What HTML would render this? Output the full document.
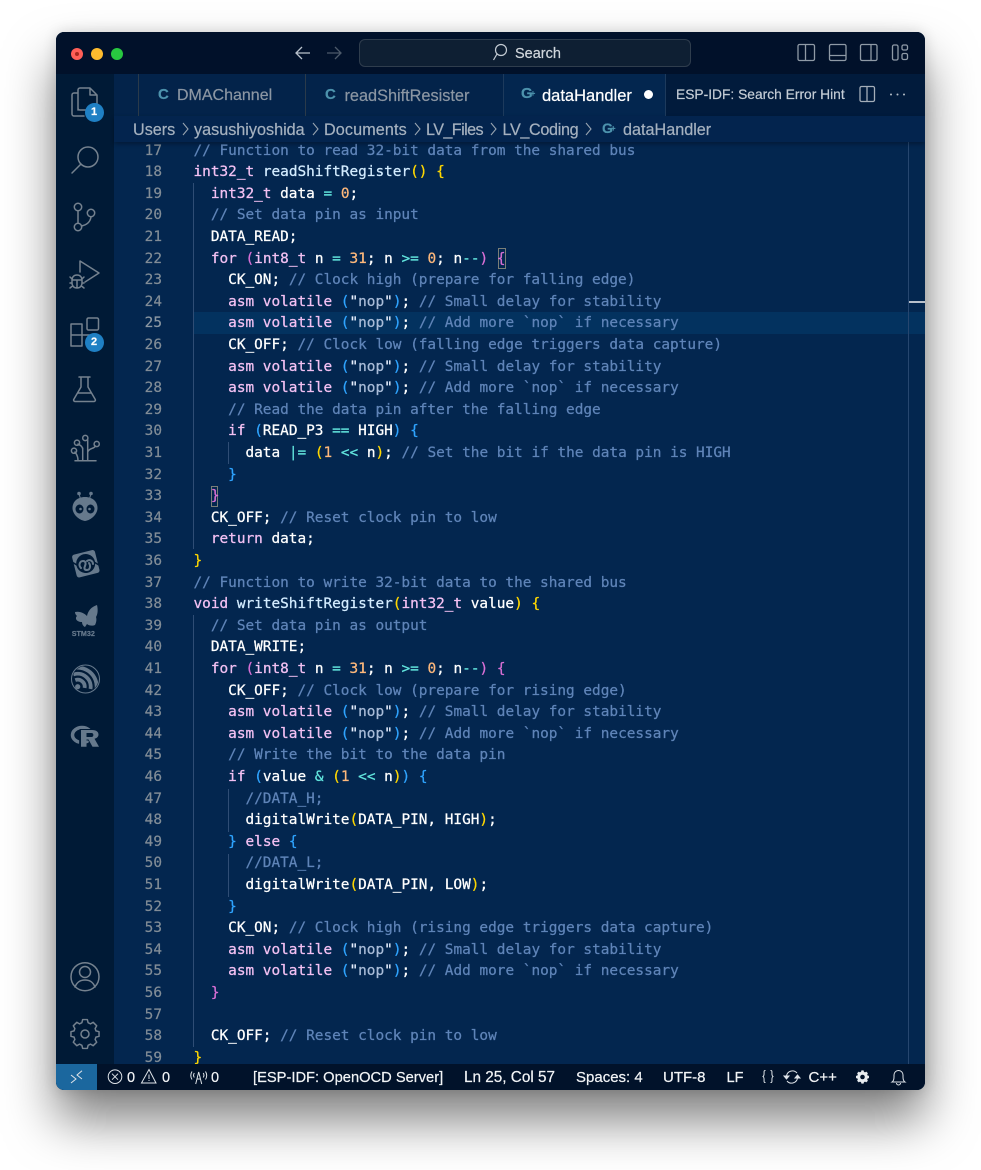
<!DOCTYPE html>
<html><head><meta charset="utf-8"><style>
html,body{margin:0;padding:0;background:#fff;width:981px;height:1170px;overflow:hidden}
*{box-sizing:border-box}
.abs,.win,.l,.n{position:absolute}
.win{left:56px;top:32px;width:869px;height:1058px;border-radius:8px;background:#03264f;box-shadow:0 30px 50px rgba(0,0,0,.5),0 0 14px rgba(0,0,0,.14);overflow:hidden}
.ui{font-family:"Liberation Sans",sans-serif;position:absolute;white-space:pre;-webkit-text-stroke:.2px}
.l{left:137.5px;height:21.6px;font:14.4px/21.6px "DejaVu Sans Mono","Liberation Mono",monospace;color:#fff;white-space:pre;-webkit-text-stroke:.25px}
.n{left:60px;width:46px;text-align:right;font:14.4px/21.6px "DejaVu Sans Mono","Liberation Mono",monospace;color:#828d97;-webkit-text-stroke:.2px}
.c{color:#5f84b8}.k{color:#f2c0f2}.f{color:#d3ecff}.o{color:#62e6de}.d{color:#ffb97c}.y{color:#ffd700}.p{color:#da70d6}.b{color:#2fa4ff}.s{color:#a9bcd8}.q{color:#e8f0ff}
.g{position:absolute;width:1px;background:#2f4d75}
svg{position:absolute;overflow:visible}
.st{font-size:14.5px;color:#f2f4f6;top:1032.5px;line-height:26px}
.bc{font-size:16.2px;color:#a5b1bf;top:84.5px;line-height:26px}
</style></head><body>
<div class="win">
<div class="abs" style="left:0;top:0;width:869px;height:42px;background:#01112a"></div>
<div class="abs" style="left:0;top:42px;width:58px;height:990px;background:#001a36"></div>
<div class="abs" style="left:58px;top:42px;width:811px;height:42px;background:#03234a"></div>
<div class="abs" style="left:82px;top:42px;width:1px;height:42px;background:#2a3a4a"></div>
<div class="abs" style="left:249px;top:42px;width:1px;height:42px;background:#2a3a4a"></div>
<div class="abs" style="left:447px;top:42px;width:163px;height:42px;background:#03264f;border-left:1px solid #1d3a5c;border-right:1px solid #1d3a5c"></div>
<div class="abs" style="left:610px;top:42px;width:259px;height:42px;background:#011b3c"></div>
<div class="abs" style="left:58px;top:84px;width:811px;height:26px;background:#03244e;box-shadow:0 2px 4px rgba(0,0,0,.3);z-index:3"></div>

<!-- traffic lights -->
<div class="abs" style="left:15px;top:16px;width:12px;height:12px;border-radius:50%;background:#ff5f57"></div>
<div class="abs" style="left:19px;top:20px;width:4px;height:4px;border-radius:50%;background:#a8281e"></div>
<div class="abs" style="left:35px;top:16px;width:12px;height:12px;border-radius:50%;background:#febc2e"></div>
<div class="abs" style="left:55px;top:16px;width:12px;height:12px;border-radius:50%;background:#28c840"></div>
<div class="abs" style="left:303px;top:7px;width:332px;height:28px;border-radius:6px;background:#0e1f33;border:1px solid #2f3d4d"></div>
<div class="ui" style="left:459px;top:8px;line-height:28px;font-size:14.5px;color:#d0d6dc">Search</div>
<!-- title icons -->
<svg style="left:0;top:0" width="869" height="42" fill="none"><path d="M240 21H254M246 15L240 21L246 27" stroke="#b9c2cc" stroke-width="1.3"/><path d="M271 21H285M279 15L285 21L279 27" stroke="#4d5a6a" stroke-width="1.3"/>
<circle cx="445" cy="18" r="5.5" stroke="#c4ccd4" stroke-width="1.2"/><path d="M441 22L437.500 28" stroke="#c4ccd4" stroke-width="1.2"/>
<g stroke="#8f9aa6" stroke-width="1.3"><rect x="742" y="12.500" width="16.500" height="16" rx="1.500"/><path d="M749.500 12.500V28.500"/><rect x="773.500" y="12.500" width="16.500" height="16" rx="1.500"/><path d="M773.500 23.500H790"/><rect x="804.500" y="12.500" width="16.500" height="16" rx="1.500"/><path d="M815 12.500V28.500"/><rect x="836.500" y="13" width="5.500" height="15" rx="1.500"/><rect x="846" y="13" width="5.500" height="5" rx="1.500"/><rect x="846" y="21.500" width="5.500" height="6" rx="1.500"/></g></svg>

<!-- tabs -->
<div class="ui" style="left:102px;top:42px;line-height:42px;font-size:15px;font-weight:bold;color:#4d93ad">C</div>
<div class="ui" style="left:121px;top:42px;line-height:44px;font-size:16px;color:#8b96a3">DMAChannel</div>
<div class="ui" style="left:269px;top:42px;line-height:42px;font-size:15px;font-weight:bold;color:#4d93ad">C</div>
<div class="ui" style="left:288.500px;top:42px;line-height:44px;font-size:16.300px;color:#8b96a3">readShiftResister</div>
<div class="ui" style="left:465px;top:41px;line-height:42px;font-size:15px;font-weight:bold;color:#4d93ad">G<span style="font-size:8px;position:relative;top:-2px;left:-2px">+</span></div>
<div class="ui" style="left:486px;top:42px;line-height:44px;font-size:16.500px;color:#fff">dataHandler</div>
<div class="abs" style="left:587.500px;top:57.500px;width:9px;height:9px;border-radius:50%;background:#fff"></div>
<div class="ui" style="left:620px;top:42px;line-height:42px;font-size:13.800px;color:#c5cdd6">ESP-IDF: Search Error Hint</div>
<svg style="left:0;top:0" width="869" height="84" fill="none"><rect x="804" y="54.500" width="14.500" height="15" rx="1.500" stroke="#a4aeb9" stroke-width="1.300"/><path d="M811 54.500V69.500" stroke="#a4aeb9" stroke-width="1.300"/><g fill="#b5bec8"><circle cx="835" cy="62.500" r="1"/><circle cx="841.500" cy="62.500" r="1"/><circle cx="848" cy="62.500" r="1"/></g></svg>

<!-- breadcrumb -->
<div style="position:absolute;left:0;top:0;z-index:4">
<div class="ui bc" style="left:77px">Users</div>
<div class="ui bc" style="left:138px">yasushiyoshida</div>
<div class="ui bc" style="left:268px;letter-spacing:.1px">Documents</div>
<div class="ui bc" style="left:370px;letter-spacing:-.6px">LV_Files</div>
<div class="ui bc" style="left:446.500px;letter-spacing:-.35px">LV_Coding</div>
<div class="ui bc" style="left:567px">dataHandler</div>
<div class="ui" style="left:546px;top:83px;line-height:26px;font-size:14px;font-weight:bold;color:#4d93ad">G<span style="font-size:8px;position:relative;top:-2px;left:-2px">+</span></div>
<svg style="left:0;top:0" width="600" height="110" fill="none" stroke="#97a3b0" stroke-width="1.100"><path d="M127 91L132 97L127 103M257 91L262 97L257 103M359 91L364 97L359 103M435 91L440 97L435 103M530 91L535 97L530 103"/></svg>
</div>

<!-- editor -->
<div class="abs" style="left:138px;top:279.500px;width:731px;height:22px;background:#03325f"></div>
<div class="abs" style="left:852px;top:110px;width:1px;height:922px;background:#26466f"></div>
<div class="abs" style="left:853px;top:269px;width:16px;height:2px;background:#b8c0cc"></div>
<div class="g" style="left:137px;top:151px;height:366px"></div>
<div class="g" style="left:137px;top:583px;height:432px"></div>
<div class="g" style="left:172px;top:410px;height:22px"></div>
<div class="g" style="left:172px;top:757px;height:43px"></div>
<div class="g" style="left:172px;top:822px;height:43px"></div>
<div class="abs" style="left:441.500px;top:216px;width:8px;height:21px;border:1px solid #7a7f78"></div>
<div class="abs" style="left:154.500px;top:453.500px;width:7.500px;height:21px;border:1px solid #7a7f78"></div>

<div style="position:absolute;left:0;top:1.350px;width:869px;height:1030px">
<div class="n" style="top:107.200px">17</div><div class="l" style="top:107.200px"><span class="c">// Function to read 32-bit data from the shared bus</span></div>
<div class="n" style="top:128.800px">18</div><div class="l" style="top:128.800px"><span class="k">int32_t</span> <span class="f">readShiftRegister</span><span class="y">()</span> <span class="y">{</span></div>
<div class="n" style="top:150.400px">19</div><div class="l" style="top:150.400px">  <span class="k">int32_t</span> data <span class="o">=</span> <span class="d">0</span>;</div>
<div class="n" style="top:172px">20</div><div class="l" style="top:172px">  <span class="c">// Set data pin as input</span></div>
<div class="n" style="top:193.600px">21</div><div class="l" style="top:193.600px">  DATA_READ;</div>
<div class="n" style="top:215.200px">22</div><div class="l" style="top:215.200px">  <span class="k">for</span> <span class="p">(</span><span class="k">int8_t</span> n <span class="o">=</span> <span class="d">31</span>; n <span class="o">&gt;=</span> <span class="d">0</span>; n<span class="o">--</span><span class="p">)</span> <span class="p">{</span></div>
<div class="n" style="top:236.800px">23</div><div class="l" style="top:236.800px">    CK_ON; <span class="c">// Clock high (prepare for falling edge)</span></div>
<div class="n" style="top:258.400px">24</div><div class="l" style="top:258.400px">    <span class="k">asm volatile</span> <span class="b">(</span><span class="q">"</span><span class="s">nop</span><span class="q">"</span><span class="b">)</span>; <span class="c">// Small delay for stability</span></div>
<div class="n" style="top:280px;color:#8b97a2">25</div><div class="l" style="top:280px">    <span class="k">asm volatile</span> <span class="b">(</span><span class="q">"</span><span class="s">nop</span><span class="q">"</span><span class="b">)</span>; <span class="c">// Add more `nop` if necessary</span></div>
<div class="n" style="top:301.600px">26</div><div class="l" style="top:301.600px">    CK_OFF; <span class="c">// Clock low (falling edge triggers data capture)</span></div>
<div class="n" style="top:323.200px">27</div><div class="l" style="top:323.200px">    <span class="k">asm volatile</span> <span class="b">(</span><span class="q">"</span><span class="s">nop</span><span class="q">"</span><span class="b">)</span>; <span class="c">// Small delay for stability</span></div>
<div class="n" style="top:344.800px">28</div><div class="l" style="top:344.800px">    <span class="k">asm volatile</span> <span class="b">(</span><span class="q">"</span><span class="s">nop</span><span class="q">"</span><span class="b">)</span>; <span class="c">// Add more `nop` if necessary</span></div>
<div class="n" style="top:366.400px">29</div><div class="l" style="top:366.400px">    <span class="c">// Read the data pin after the falling edge</span></div>
<div class="n" style="top:388px">30</div><div class="l" style="top:388px">    <span class="k">if</span> <span class="b">(</span>READ_P3 <span class="o">==</span> HIGH<span class="b">)</span> <span class="b">{</span></div>
<div class="n" style="top:409.600px">31</div><div class="l" style="top:409.600px">      data <span class="o">|=</span> <span class="y">(</span><span class="d">1</span> <span class="o">&lt;&lt;</span> n<span class="y">)</span>; <span class="c">// Set the bit if the data pin is HIGH</span></div>
<div class="n" style="top:431.200px">32</div><div class="l" style="top:431.200px">    <span class="b">}</span></div>
<div class="n" style="top:452.800px">33</div><div class="l" style="top:452.800px">  <span class="p">}</span></div>
<div class="n" style="top:474.400px">34</div><div class="l" style="top:474.400px">  CK_OFF; <span class="c">// Reset clock pin to low</span></div>
<div class="n" style="top:496px">35</div><div class="l" style="top:496px">  <span class="k">return</span> data;</div>
<div class="n" style="top:517.600px">36</div><div class="l" style="top:517.600px"><span class="y">}</span></div>
<div class="n" style="top:539.200px">37</div><div class="l" style="top:539.200px"><span class="c">// Function to write 32-bit data to the shared bus</span></div>
<div class="n" style="top:560.800px">38</div><div class="l" style="top:560.800px"><span class="k">void</span> <span class="f">writeShiftRegister</span><span class="y">(</span><span class="k">int32_t</span> value<span class="y">)</span> <span class="y">{</span></div>
<div class="n" style="top:582.400px">39</div><div class="l" style="top:582.400px">  <span class="c">// Set data pin as output</span></div>
<div class="n" style="top:604px">40</div><div class="l" style="top:604px">  DATA_WRITE;</div>
<div class="n" style="top:625.600px">41</div><div class="l" style="top:625.600px">  <span class="k">for</span> <span class="p">(</span><span class="k">int8_t</span> n <span class="o">=</span> <span class="d">31</span>; n <span class="o">&gt;=</span> <span class="d">0</span>; n<span class="o">--</span><span class="p">)</span> <span class="p">{</span></div>
<div class="n" style="top:647.200px">42</div><div class="l" style="top:647.200px">    CK_OFF; <span class="c">// Clock low (prepare for rising edge)</span></div>
<div class="n" style="top:668.800px">43</div><div class="l" style="top:668.800px">    <span class="k">asm volatile</span> <span class="b">(</span><span class="q">"</span><span class="s">nop</span><span class="q">"</span><span class="b">)</span>; <span class="c">// Small delay for stability</span></div>
<div class="n" style="top:690.400px">44</div><div class="l" style="top:690.400px">    <span class="k">asm volatile</span> <span class="b">(</span><span class="q">"</span><span class="s">nop</span><span class="q">"</span><span class="b">)</span>; <span class="c">// Add more `nop` if necessary</span></div>
<div class="n" style="top:712px">45</div><div class="l" style="top:712px">    <span class="c">// Write the bit to the data pin</span></div>
<div class="n" style="top:733.600px">46</div><div class="l" style="top:733.600px">    <span class="k">if</span> <span class="b">(</span>value <span class="o">&amp;</span> <span class="y">(</span><span class="d">1</span> <span class="o">&lt;&lt;</span> n<span class="y">)</span><span class="b">)</span> <span class="b">{</span></div>
<div class="n" style="top:755.200px">47</div><div class="l" style="top:755.200px">      <span class="c">//DATA_H;</span></div>
<div class="n" style="top:776.800px">48</div><div class="l" style="top:776.800px">      digitalWrite<span class="y">(</span>DATA_PIN, HIGH<span class="y">)</span>;</div>
<div class="n" style="top:798.400px">49</div><div class="l" style="top:798.400px">    <span class="b">}</span> <span class="k">else</span> <span class="b">{</span></div>
<div class="n" style="top:820px">50</div><div class="l" style="top:820px">      <span class="c">//DATA_L;</span></div>
<div class="n" style="top:841.600px">51</div><div class="l" style="top:841.600px">      digitalWrite<span class="y">(</span>DATA_PIN, LOW<span class="y">)</span>;</div>
<div class="n" style="top:863.200px">52</div><div class="l" style="top:863.200px">    <span class="b">}</span></div>
<div class="n" style="top:884.800px">53</div><div class="l" style="top:884.800px">    CK_ON; <span class="c">// Clock high (rising edge triggers data capture)</span></div>
<div class="n" style="top:906.400px">54</div><div class="l" style="top:906.400px">    <span class="k">asm volatile</span> <span class="b">(</span><span class="q">"</span><span class="s">nop</span><span class="q">"</span><span class="b">)</span>; <span class="c">// Small delay for stability</span></div>
<div class="n" style="top:928px">55</div><div class="l" style="top:928px">    <span class="k">asm volatile</span> <span class="b">(</span><span class="q">"</span><span class="s">nop</span><span class="q">"</span><span class="b">)</span>; <span class="c">// Add more `nop` if necessary</span></div>
<div class="n" style="top:949.600px">56</div><div class="l" style="top:949.600px">  <span class="p">}</span></div>
<div class="n" style="top:971.200px">57</div>
<div class="n" style="top:992.800px">58</div><div class="l" style="top:992.800px">  CK_OFF; <span class="c">// Reset clock pin to low</span></div>
<div class="n" style="top:1014.400px">59</div><div class="l" style="top:1014.400px"><span class="y">}</span></div>
</div>

<!-- activity icons -->
<svg style="left:0;top:0;z-index:5" width="58" height="1032" fill="none" stroke="#75828f" stroke-width="1.500" stroke-linejoin="round" stroke-linecap="round">
<defs><clipPath id="ec"><circle cx="29.500" cy="647" r="13"/></clipPath></defs>
<path d="M22 61h-4a2 2 0 0 0-2 2v19a2 2 0 0 0 2 2h10M22 78V58a2 2 0 0 1 2-2h10l7 7v13a2 2 0 0 1-2 2H24a2 2 0 0 1-2-2zM34 56v7h7"/>
<circle cx="32" cy="125" r="10"/><path d="M25 132L16 141"/>
<circle cx="22" cy="175" r="3.700"/><circle cx="22" cy="195" r="3.700"/><circle cx="35" cy="181" r="3.700"/><path d="M22 179V191M25.500 194C30 193 34 191 35 185"/>
<path d="M24 240V229L43 241L29 250"/><path d="M21 243c3 0 5 2 5 5v3c0 3-2 5-5 5s-5-2-5-5v-3c0-3 2-5 5-5zM16 248h10M21 248v8M14 245l2.500 2.500M28 245l-2.500 2.500M14 251h2M28 251h-2M14 256l2.500-2M28 256l-2.500-2"/>
<path d="M15 292H26V314H15ZM15 303H37V309M26 292V303"/><rect x="31" y="286" width="11.500" height="12" rx="1.500"/>
<path d="M23 345H34M25 345V355L18 367a1.500 1.500 0 0 0 1 2.500H38a1.500 1.500 0 0 0 1-2.500L32 355V345M22 361H35"/>
<path d="M19 428.700H40M26.700 428.700V416M31.700 428.700V408M26.700 417C26 413 23 413 22 412M31.700 420C33 416 38 417 39.500 414M22 428.700C22 423 20 422 19 420"/><circle cx="29.300" cy="406" r="2.600"/><circle cx="21" cy="410.700" r="2.600"/><circle cx="40.700" cy="412" r="2.600"/><circle cx="18" cy="418.700" r="2.600"/>
<g stroke="none" fill="#66798c">
<path d="M29 465c8 0 12.500 5 12.500 11 0 6-6 12-12.500 13-6.500-1-12.500-7-12.500-13 0-6 4.500-11 12.500-11z"/><circle cx="23" cy="461.500" r="1.800"/><circle cx="35" cy="461.500" r="1.800"/><path d="M22.500 462l1-.3 1.500 5-1 .3zM35.500 462l-1-.3-1.500 5 1 .3z"/></g>
<g stroke="none" fill="#001a36"><ellipse cx="23.500" cy="477" rx="4" ry="4.500"/><ellipse cx="34.500" cy="477" rx="4" ry="4.500"/></g>
<g stroke="none" fill="#66798c"><circle cx="24.500" cy="477" r="1.300"/><circle cx="33.500" cy="477" r="1.300"/></g>
<!-- swirl icon -->
<g transform="rotate(-14 29.700 531.500)"><rect x="18" y="520" width="23.500" height="23.500" rx="2.500" fill="#66798c" stroke="none"/><circle cx="29.700" cy="531.500" r="9.500" fill="#001a36" stroke="none"/><path d="M16 526L24 534M43 537L35 529" stroke="#001a36" stroke-width="1.500"/></g>
<path d="M25 536c-3-3-1-7 2-7s3 3 2 5-1 4 2 4 4-4 2-7M31 529c3-2 6 0 6 3" stroke="#66798c" stroke-width="2"/>
<!-- butterfly -->
<path d="M19 580c5-1 9 1 12 4 1-5 4-9 10-11 1 4 1 9-1 12 1 3 0 6-1 8-2 1-6 1-8-1l-2 3c-2-1-3-3-3-5-3 0-5-1-6-3 0-2 0-2 1-3-1-1-2-2-2-4z" fill="#66798c" stroke="none"/>
<!-- esp -->
<circle cx="29.500" cy="647" r="14" stroke="#66798c" stroke-width="1"/>
<g clip-path="url(#ec)" stroke="#66798c" stroke-width="3.800" stroke-linecap="butt"><path d="M19.300 648.100A7 7 0 0 1 28.600 655.900M17.300 642.500A13 13 0 0 1 34.500 657M15.200 636.800A19 19 0 0 1 40.400 658"/></g><circle cx="21.700" cy="654.700" r="2.600" fill="#66798c" stroke="none"/>
<!-- R -->
<ellipse cx="26" cy="703" rx="9.500" ry="7.500" stroke="#66798c" stroke-width="3.500"/>
<path d="M24 697.500h12c5 0 7 2 7 5 0 3-2 4-4 4.500l4.500 8h-7l-4-7h-3v7h-6z" fill="#001a36" stroke="#001a36" stroke-width="1"/>
<path d="M25 698h11c4.500 0 6.500 2 6.500 4.500 0 2.500-2 3.700-4 4.300l4.500 8h-6.500l-4-7.300h-2v7.300h-5.500zM30.500 701v4h5c2.500 0 2.500-4 0-4z" fill="#66798c" fill-rule="evenodd" stroke="none"/>
<!-- account & gear -->
<circle cx="29" cy="944.700" r="14"/><circle cx="29" cy="940" r="5.500"/><path d="M19 955c2-5 5-7 10-7s8 2 10 7"/>
<circle cx="29" cy="1002" r="4"/><path d="M26 988h6l1 4 3 1.500 3.500-2 4.500 4.500-2 3.500 1 3 4 1v6l-4 1-1 3 2 3.500-4.500 4.500-3.500-2-3 1.500-1 4h-6l-1-4-3-1.500-3.500 2-4.500-4.500 2-3.500-1-3-4-1v-6l4-1 1-3-2-3.500 4.500-4.500 3.500 2 3-1.500z" stroke-width="1.900" transform="translate(29,1002) scale(.78) translate(-29,-1006.500)"/>
</svg>
<div class="ui" style="left:15.700px;top:597px;font-size:7.200px;font-weight:bold;color:#66798c;z-index:5">STM32</div>
<div class="abs" style="left:28.500px;top:71px;width:19px;height:19px;border-radius:50%;background:#1f80c4;z-index:6"></div>
<div class="ui" style="left:28.500px;top:71px;width:19px;line-height:19px;text-align:center;font-size:11px;font-weight:bold;color:#fff;z-index:7">1</div>
<div class="abs" style="left:28.500px;top:300.500px;width:19px;height:19px;border-radius:50%;background:#1f80c4;z-index:6"></div>
<div class="ui" style="left:28.500px;top:300.500px;width:19px;line-height:19px;text-align:center;font-size:11px;font-weight:bold;color:#fff;z-index:7">2</div>

<!-- status -->
<div class="abs" style="left:0;top:1032px;width:869px;height:26px;background:#01122a;z-index:8"></div>
<div class="abs" style="left:0;top:1032px;width:41px;height:26px;background:#1b679e;z-index:8"></div>
<div style="position:absolute;left:0;top:0;z-index:9">
<svg style="left:0;top:0" width="869" height="1058" fill="none" stroke="#dfe4e9" stroke-width="1"><path d="M15 1043l5 4-5 4M26 1038.700l-5 4.300 5 4"/>
<circle cx="59" cy="1044.700" r="6.800"/><path d="M56 1041.700l6 6M62 1041.700l-6 6"/>
<path d="M93 1037.500l7 13.500h-14.500zM93 1042.500v4.500M93 1048v1"/>
<path d="M139.700 1052l3-12 3 12M140.700 1047h4M136 1039.500c-1.500 2.500-1.500 5.500 0 8M149.500 1039.500c1.500 2.500 1.500 5.500 0 8M138.300 1041c-1 1.500-1 3 0 4.500M147.200 1041c1 1.500 1 3 0 4.500"/>
<path d="M709.500 1038.500c-3-.500 0 4.500-2.500 6 2.500 1.500-.500 6.500 2.500 6M714.500 1038.500c3-.500 0 4.500 2.500 6-2.500 1.500.500 6.500-2.500 6"/>
<path d="M730.500 1044a6 6 0 0 1 10.500-3M741.500 1046a6 6 0 0 1-10.500 3"/>
<path d="M728 1044h5l-2.500 3zM739 1046h5l-2.500-3z" fill="#dfe4e9"/>
<path d="M836 1050h13c-1.500-1-2-2.500-2-5v-2a4.500 4.500 0 0 0-9 0v2c0 2.500-.500 4-2 5zM840.500 1051a2 2 0 0 0 4 0"/>
<path d="M26 988h6l1 4 3 1.500 3.500-2 4.500 4.500-2 3.500 1 3 4 1v6l-4 1-1 3 2 3.500-4.500 4.500-3.500-2-3 1.500-1 4h-6l-1-4-3-1.500-3.500 2-4.500-4.500 2-3.500-1-3-4-1v-6l4-1 1-3-2-3.500 4.500-4.500 3.500 2 3-1.500z" fill="#e8ecef" stroke="none" transform="translate(806.500,1045) scale(.36) translate(-29,-1006.500)"/><circle cx="806.500" cy="1045" r="2.300" fill="#01122a" stroke="none"/>
</svg>
<div class="ui st" style="left:71px">0</div>
<div class="ui st" style="left:106px">0</div>
<div class="ui st" style="left:155px">0</div>
<div class="ui st" style="left:197px;font-size:14.700px">[ESP-IDF: OpenOCD Server]</div>
<div class="ui st" style="left:408px;font-size:15.300px">Ln 25, Col 57</div>
<div class="ui st" style="left:520px;font-size:15px">Spaces: 4</div>
<div class="ui st" style="left:607px;font-size:15px">UTF-8</div>
<div class="ui st" style="left:670.500px">LF</div>
<div class="ui st" style="left:752.500px;font-size:15px">C++</div>
</div>
</div>
</body></html>
